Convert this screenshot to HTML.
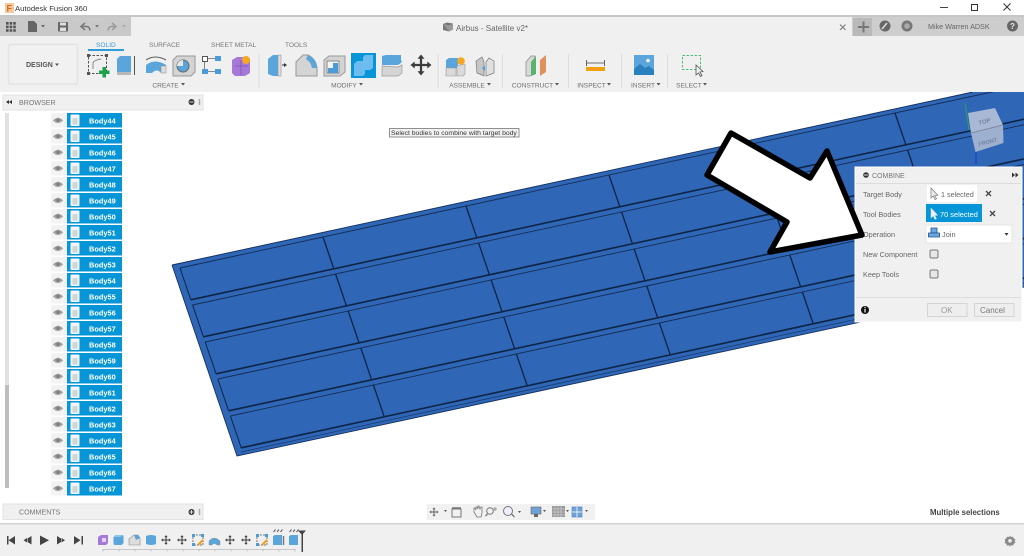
<!DOCTYPE html>
<html><head><meta charset="utf-8"><style>
html,body{margin:0;padding:0;width:1024px;height:556px;overflow:hidden;background:#fff}
svg{display:block;filter:blur(.35px)}
text{font-family:"Liberation Sans",sans-serif;font-size:7.6px;fill:#666}
.r{font-size:6.6px;fill:#6f6f6f;text-anchor:middle}
.t{font-size:6.6px;fill:#777}
.b{font-size:7.4px;font-weight:bold;fill:#fff}
.d{font-size:7.3px;fill:#666}
.l{stroke:#0e2547;fill:none;vector-effect:non-scaling-stroke}
</style></head><body>
<svg width="1024" height="556" viewBox="0 0 1024 556" xmlns="http://www.w3.org/2000/svg">
<defs>
<g id="row">
<rect x="51" y="0" width="16" height="14.5" fill="#f3f3f3"/>
<rect x="67" y="0" width="55" height="14.5" fill="#0696d7"/>
<rect x="70.500" y="1.500" width="9" height="11.500" rx="1" fill="#f4f4f4"/>
<rect x="72.500" y="5" width="5" height="6.500" fill="#cfd6da"/>
<path d="M53 7.500Q58 2 63 7.500Q58 12.500 53 7.500Z" fill="#a0a0a0"/>
<circle cx="58" cy="7.300" r="1.700" fill="#7f7f7f"/>
</g>
<g id="move" fill="#3c3c3c">
<path d="M-.8-5h1.600v10h-1.600zM-5-.8h10v1.600h-10z"/>
<path d="M0-7.500l2.500 3h-5zM0 7.500l2.500-3h-5zM-7.500 0l3-2.500v5zM7.500 0l-3-2.500v5z"/>
</g>
<g id="blk">
<path d="M-5-3l2-2h7l1 1v7l-2 2h-7l-1-1z" fill="#5aa5dc"/>
<path d="M-5-3l2-2h7l-2 2z" fill="#8cc4ea"/>
</g>
<g id="skt">
<rect x="-5" y="-5" width="10" height="10" fill="none" stroke="#777" stroke-dasharray="2 1"/>
<path d="M-6-6h3v3h-3zM3-6h3v3h-3zM-6 3h3v3h-3z" fill="#4a9bd8"/>
<path d="M0 5l5-5" stroke="#f39c12" stroke-width="2"/>
</g>
</defs>

<!-- plate -->
<path d="M172 265L973 92H1024V287L237 456Z" fill="#2f66b5"/>
<path d="M172 265L973 92M172 265L237 456L1024 287" fill="none" stroke="#15315f" stroke-width=".9"/>
<path d="M241 452L1024 283" fill="none" stroke="#1a3c73" stroke-width=".8"/>
<g transform="matrix(143 -31 12.6 37 180 268)">
<path class="l" d="M0 0H7M0 1H7M0 2H7M0 3H7M0 4H7" stroke-width=".9" stroke-opacity=".85"/>
<path class="l" d="M0 .86H7M0 1.860H7M0 2.860H7M0 3.860H7M0 4.860H7" stroke-width="1.600"/>
<path class="l" d="M0 0V.86M0 1V1.860M0 2V2.860M0 3V3.860M0 4V4.860" stroke-width="1"/>
<path class="l" d="M1 0V.86M1 1V1.860M1 2V2.860M1 3V3.860M1 4V4.860" stroke-width="1.300"/>
<path class="l" d="M2 0V.86M2 1V1.860M2 2V2.860M2 3V3.860M2 4V4.860" stroke-width="1.300"/>
<path class="l" d="M3 0V.86M3 1V1.860M3 2V2.860M3 3V3.860M3 4V4.860" stroke-width="1.300"/>
<path class="l" d="M4 0V.86M4 1V1.860M4 2V2.860M4 3V3.860M4 4V4.860" stroke-width="1.300"/>
<path class="l" d="M5 0V.86M5 1V1.860M5 2V2.860M5 3V3.860M5 4V4.860" stroke-width="1.300"/>
</g>

<!-- title bar -->
<rect x="0" y="0" width="1024" height="92" fill="#fff"/>
<rect x="0" y="15" width="1024" height="2" fill="#c6c6c6"/>
<rect x="0" y="17" width="1024" height="75" fill="#f0f0f0"/>
<rect x="0" y="17" width="131" height="19" fill="#c9c9c9"/>
<rect x="852" y="17" width="172" height="19" fill="#cdcdcd"/>
<rect x="853" y="18" width="19" height="18" fill="#b9b9b9"/>
<rect x="5" y="3" width="9" height="10" fill="#f5c99a"/>
<text x="6.500" y="11.500" style="font-size:9px;font-weight:bold;fill:#d9661f">F</text>
<text x="15" y="11" style="font-size:7.700px;fill:#333">Autodesk Fusion 360</text>
<path d="M940 7.500h8" stroke="#444" stroke-width="1"/>
<rect x="971.500" y="4.500" width="6" height="6" fill="none" stroke="#333"/>
<path d="M1003.500 3.500l7 7M1010.500 3.500l-7 7" stroke="#333" stroke-width="1"/>

<!-- tab bar left -->
<path d="M6 22h2.600v2.600H6zM9.600 22h2.600v2.600H9.600zM13.200 22h2.600v2.600h-2.600zM6 25.600h2.600v2.600H6zM9.600 25.600h2.600v2.600H9.600zM13.200 25.600h2.600v2.600h-2.600zM6 29.200h2.600v2.600H6zM9.600 29.200h2.600v2.600H9.600zM13.200 29.200h2.600v2.600h-2.600z" fill="#555"/>
<path d="M28 21h6l3 3v8h-9z" fill="#666"/>
<path d="M41 25h4l-2 2.500z" fill="#666"/>
<rect x="58" y="22" width="10" height="9.500" rx="1" fill="#666"/><rect x="60" y="22.500" width="6" height="3" fill="#ddd"/><rect x="60" y="27.500" width="6" height="3.500" fill="#ddd"/>
<path d="M85 23l-4 3.500 4 3.500M81.500 26.500h5q3 0 3.500 4" fill="none" stroke="#777" stroke-width="1.500"/>
<path d="M95 25h4l-2 2.500z" fill="#777"/>
<path d="M112 23l4 3.500-4 3.500M115.500 26.500h-4q-3 0-3.500 4" fill="none" stroke="#9a9a9a" stroke-width="1.500"/>
<path d="M122 25h4l-2 2.500z" fill="#aaa"/>
<!-- document tab -->
<path d="M443 24l4-1.500 6 1v6l-4 2-6-1.500z" fill="#777"/><path d="M443 24l6 1.500 4-2v6l-4 2z" fill="#999"/>
<text x="456" y="31" style="font-size:8px;fill:#666">Airbus - Satellite v2*</text>
<path d="M840 24.500l5.500 5.500M845.500 24.500l-5.500 5.500" stroke="#777" stroke-width="1"/>
<path d="M858 27h11M863.500 21.500v11" stroke="#777" stroke-width="2"/>
<circle cx="885" cy="26" r="5.500" fill="#666"/><path d="M882 29l5-6" stroke="#ddd" stroke-width="1.500"/>
<circle cx="907" cy="26" r="5.500" fill="#777"/><circle cx="907" cy="26" r="2.800" fill="#aaa"/>
<text x="928" y="29" style="font-size:7.200px;fill:#666">Mike Warren ADSK</text>
<circle cx="1012.500" cy="26" r="5.500" fill="#666"/>
<text x="1010" y="29" style="font-size:8px;font-weight:bold;fill:#e8e8e8">?</text>

<!-- design button -->
<rect x="8.500" y="44.500" width="69" height="39.500" rx="2" fill="#f1f1f1" stroke="#e2e2e2" stroke-width="1.500"/>
<text x="26" y="67" style="font-size:7px;font-weight:bold;fill:#555">DESIGN</text>
<path d="M55 63.500h4l-2 2.500z" fill="#555"/>

<!-- ribbon tabs -->
<text class="t" x="96" y="47" style="fill:#3a9bd8">SOLID</text>
<text class="t" x="149" y="47">SURFACE</text>
<text class="t" x="211" y="47">SHEET METAL</text>
<text class="t" x="285" y="47">TOOLS</text>
<rect x="88" y="49" width="36" height="2" fill="#2f9bd8"/>

<!-- create icons -->
<rect x="88.500" y="55.500" width="18" height="18" fill="none" stroke="#555" stroke-dasharray="2.500 1.500"/>
<path d="M87 54h3v3h-3zM105 54h3v3h-3zM87 72h3v3h-3z" fill="#555"/>
<path d="M93 69V63q1-3 8-4" fill="none" stroke="#888"/>
<path d="M102.500 67h3.500v3.500h3.500v3.500h-3.500v3.500h-3.500v-3.500h-3.500v-3.500h3.500z" fill="#1aa34a"/>
<path d="M117 59l3-3h11v18l-3 1h-11z" fill="#5aa5dc"/><path d="M117 72h14v3h-14z" fill="#b8b8b8"/>
<path d="M134.500 56v19" stroke="#555"/>
<path d="M146 65q9-7 20 0v8h-5q-4-5-9 0h-6z" fill="#5aa5dc"/><path d="M146 60q9-6 20 0" fill="none" stroke="#555"/>
<rect x="161" y="66" width="5" height="7" fill="#ddd" stroke="#888" stroke-width=".500"/>
<path d="M173 60l4-4h18v16l-4 4h-18z" fill="#d4d4d4" stroke="#999"/>
<circle cx="183" cy="66" r="6" fill="#5aa5dc" stroke="#666"/><path d="M183 66v-6a6 6 0 0 0-6 6z" fill="#e8e8e8"/>
<rect x="202.500" y="56.500" width="5" height="5" fill="#fff" stroke="#555"/><rect x="215" y="56" width="6" height="5" fill="#4a9bd8"/><rect x="202" y="69" width="6" height="5" fill="#4a9bd8"/><rect x="215" y="69" width="6" height="5" fill="#4a9bd8"/>
<path d="M208 58.500h7M208 71.500h7M204.500 62v7" stroke="#666" stroke-width=".800"/>
<path d="M232 60l5-3h11l2 3v13l-5 3h-10l-3-3z" fill="#a678d8"/><path d="M235 66h13M241 60v15" stroke="#8050b8" stroke-width=".800"/>
<circle cx="246" cy="60" r="4" fill="#f5a623"/>
<text class="r" x="165.500" y="87.500">CREATE</text><path d="M181 83h4l-2 2.500z" fill="#555"/>
<rect x="258.500" y="54" width="1" height="34" fill="#dcdcdc"/>

<!-- modify icons -->
<path d="M268 59l5-4h7v21h-7l-5-2z" fill="#5aa5dc"/><path d="M278 55h3v21h-3z" fill="#ddd" stroke="#888" stroke-width=".500"/>
<path d="M282 65h3" stroke="#333"/><path d="M284 63l3 2-3 2z" fill="#333"/>
<path d="M296 62l7-7h5q8 4 9 13v8h-21z" fill="#d4d4d4" stroke="#999"/><path d="M308 55q8 4 9 13h-5q-1-6-6-9z" fill="#5aa5dc"/>
<path d="M324 60l5-4h16v16l-5 4h-16z" fill="#d4d4d4" stroke="#999"/><rect x="327" y="61" width="12" height="12" fill="#f4f4f4" stroke="#888"/><path d="M328 73v-5h5v-5h5v10z" fill="#4a9bd8"/>
<rect x="351" y="53" width="25" height="25" fill="#0696d7"/>
<path d="M354 64l3-3h6v-4l2-2h8v13l-3 2h-5v4l-2 2h-9z" fill="#6cbcf0"/>
<path d="M382 56l4-1h15v8l-3 2h-16z" fill="#5aa5dc"/><path d="M382 63q9 4 20-2" stroke="#5aa5dc" fill="none"/>
<path d="M382 66l16 1 4-2v8l-4 3h-16z" fill="#d4d4d4" stroke="#999" stroke-width=".700"/>
<use href="#move" transform="translate(421 65) scale(1.400)"/>
<rect x="437.500" y="54" width="1" height="34" fill="#dcdcdc"/>
<text class="r" x="344" y="87.500">MODIFY</text><path d="M359 83h4l-2 2.500z" fill="#555"/>

<!-- assemble -->
<path d="M446 60l3-2h9v10h-12z" fill="#5aa5dc"/><path d="M446 68h10v8h-10zM457 66l8-2v10l-2 2h-6z" fill="#dadada" stroke="#999" stroke-width=".600"/>
<circle cx="461" cy="61" r="3.800" fill="#f5a623"/>
<path d="M476 61l6-4 2 5v14l-7-3z" fill="#c6c6c6" stroke="#777" stroke-width=".700"/>
<path d="M494 61l-5-3-3 4v14l8-3z" fill="#e0e0e0" stroke="#777" stroke-width=".700"/>
<path d="M482 68l3-2v5z" fill="#4a9bd8"/>
<text class="r" x="467" y="87.500">ASSEMBLE</text><path d="M487 83h4l-2 2.500z" fill="#555"/>
<rect x="502" y="54" width="1" height="34" fill="#dcdcdc"/>

<!-- construct -->
<path d="M526 62l5-6h4v18l-5 2h-4z" fill="#d8d8d8" stroke="#888" stroke-width=".700"/>
<path d="M531 62l5-6v18l-5 2z" fill="#59b36c"/>
<path d="M540 60l6-5v17l-6 4z" fill="#e0905a"/>
<text class="r" x="532.500" y="87.500">CONSTRUCT</text><path d="M555 83h4l-2 2.500z" fill="#555"/>
<rect x="568" y="54" width="1" height="34" fill="#dcdcdc"/>

<!-- inspect -->
<rect x="586" y="67" width="19" height="4" fill="#f0a010"/>
<path d="M586.500 60v6M604.500 60v6M587 63h17" stroke="#444" stroke-width=".800"/>
<text class="r" x="591.500" y="87.500">INSPECT</text><path d="M607 83h4l-2 2.500z" fill="#555"/>
<rect x="621" y="54" width="1" height="34" fill="#dcdcdc"/>

<!-- insert -->
<rect x="634" y="55" width="20" height="20" fill="#5aa5dc"/>
<path d="M634 75v-6l6-5 5 4 4-2 5 4v5z" fill="#2a7fbf"/>
<circle cx="648" cy="60.500" r="1.800" fill="#fff"/>
<text class="r" x="643" y="87.500">INSERT</text><path d="M656.500 83h4l-2 2.500z" fill="#555"/>
<rect x="667" y="54" width="1" height="34" fill="#dcdcdc"/>

<!-- select -->
<rect x="682.500" y="55.500" width="18" height="14" fill="none" stroke="#4fbf78" stroke-dasharray="2.500 1.500"/>
<path d="M696 65v10l2.500-2 2 3.500 1.500-1-2-3.500 3-.5z" fill="#eee" stroke="#555" stroke-width=".800"/>
<text class="r" x="689" y="87.500">SELECT</text><path d="M703 83h4l-2 2.500z" fill="#555"/>

<!-- tooltip -->
<rect x="389.500" y="128.500" width="129.500" height="8.500" fill="#f2f2f2" stroke="#777" stroke-width=".800"/>
<text x="391" y="135" style="font-size:6.800px;fill:#333">Select bodies to combine with target body</text>

<!-- browser -->
<rect x="3" y="95" width="200" height="15" fill="#f0f0f0" stroke="#e2e2e2"/>
<path d="M9 102l3-2v4zM6 102l3-2v4z" fill="#333"/>
<text x="19" y="105" style="font-size:7.100px;fill:#777">BROWSER</text>
<circle cx="191.500" cy="102" r="3" fill="#333"/><rect x="189.500" y="101.500" width="4" height="1" fill="#ddd"/>
<path d="M199.500 99v6" stroke="#aaa" stroke-width="1.500"/>
<rect x="5" y="113" width="4" height="272" fill="#e1e1e1"/>
<rect x="5" y="385" width="4" height="103" fill="#bdbdbd"/>

<use href="#row" y="113"/><text class="b" x="89" y="123.500">Body44</text>
<use href="#row" y="129"/><text class="b" x="89" y="139.500">Body45</text>
<use href="#row" y="145"/><text class="b" x="89" y="155.500">Body46</text>
<use href="#row" y="161"/><text class="b" x="89" y="171.500">Body47</text>
<use href="#row" y="177"/><text class="b" x="89" y="187.500">Body48</text>
<use href="#row" y="193"/><text class="b" x="89" y="203.500">Body49</text>
<use href="#row" y="209"/><text class="b" x="89" y="219.500">Body50</text>
<use href="#row" y="225"/><text class="b" x="89" y="235.500">Body51</text>
<use href="#row" y="241"/><text class="b" x="89" y="251.500">Body52</text>
<use href="#row" y="257"/><text class="b" x="89" y="267.500">Body53</text>
<use href="#row" y="273"/><text class="b" x="89" y="283.500">Body54</text>
<use href="#row" y="289"/><text class="b" x="89" y="299.500">Body55</text>
<use href="#row" y="305"/><text class="b" x="89" y="315.500">Body56</text>
<use href="#row" y="321"/><text class="b" x="89" y="331.500">Body57</text>
<use href="#row" y="337"/><text class="b" x="89" y="347.500">Body58</text>
<use href="#row" y="353"/><text class="b" x="89" y="363.500">Body59</text>
<use href="#row" y="369"/><text class="b" x="89" y="379.500">Body60</text>
<use href="#row" y="385"/><text class="b" x="89" y="395.500">Body61</text>
<use href="#row" y="401"/><text class="b" x="89" y="411.500">Body62</text>
<use href="#row" y="417"/><text class="b" x="89" y="427.500">Body63</text>
<use href="#row" y="433"/><text class="b" x="89" y="443.500">Body64</text>
<use href="#row" y="449"/><text class="b" x="89" y="459.500">Body65</text>
<use href="#row" y="465"/><text class="b" x="89" y="475.500">Body66</text>
<use href="#row" y="481"/><text class="b" x="89" y="491.500">Body67</text>

<!-- comments -->
<rect x="3" y="504" width="200" height="15.500" fill="#f0f0f0" stroke="#e2e2e2"/>
<text x="19" y="514.500" style="font-size:7.100px;fill:#777">COMMENTS</text>
<circle cx="191.500" cy="512" r="3" fill="#333"/><rect x="189.500" y="511.500" width="4" height="1" fill="#ddd"/><rect x="191" y="510" width="1" height="4" fill="#ddd"/>
<path d="M199.500 509v6" stroke="#aaa" stroke-width="1.500"/>

<!-- viewcube -->
<path d="M968 113l27-5 8 17-32 8z" fill="#a9b8d4"/>
<path d="M971 133l32-8 .5 18-28 9z" fill="#9db0cf"/>
<path d="M971 133l32-8" stroke="#78808c" stroke-width=".800"/>
<path d="M965 103l4 27" stroke="#2f9e5f" stroke-width="1"/>
<path d="M976 152v12" stroke="#1c3fd0" stroke-width="1.200"/>
<text transform="translate(979 125) rotate(-14)" style="font-size:6px;font-weight:bold;fill:#74849f">TOP</text>
<text transform="translate(979 146) rotate(-14)" style="font-size:5.500px;font-weight:bold;fill:#74849f">FRONT</text>

<!-- dialog -->
<rect x="855" y="167" width="167" height="155" fill="#f0f0f0" stroke="#fff" stroke-width="1"/>
<rect x="856" y="183" width="165" height="1" fill="#dcdcdc"/>
<rect x="856" y="297" width="165" height="1" fill="#dcdcdc"/>
<circle cx="866" cy="175" r="2.800" fill="#333"/><rect x="864" y="174.500" width="4" height="1" fill="#ddd"/>
<text x="872" y="178" style="font-size:7px;fill:#777">COMBINE</text>
<path d="M1012 172.500l3 2.500-3 2.500zM1015.500 172.500l3 2.500-3 2.500z" fill="#333"/>
<text class="d" x="863" y="197">Target Body</text>
<text class="d" x="863" y="217">Tool Bodies</text>
<text class="d" x="863" y="237">Operation</text>
<text class="d" x="863" y="257">New Component</text>
<text class="d" x="863" y="277">Keep Tools</text>
<rect x="927" y="185" width="50" height="17" fill="#fff"/>
<path d="M931 188v10l2.300-2 1.700 3.500 1.500-.8-1.700-3.200 3-.3z" fill="#eee" stroke="#777" stroke-width=".700"/>
<text x="941" y="197" style="font-size:7.200px;fill:#666">1 selected</text>
<path d="M986 191l5 5M991 191l-5 5" stroke="#444" stroke-width="1.300"/>
<rect x="926" y="204" width="56" height="18" fill="#0696d7"/>
<path d="M931 208v10l2.300-2 1.700 3.500 1.500-.8-1.700-3.200 3-.3z" fill="#eef" stroke="#cde" stroke-width=".500"/>
<text x="940" y="217" style="font-size:7.400px;fill:#fff">70 selected</text>
<path d="M990 211l5 5M995 211l-5 5" stroke="#444" stroke-width="1.300"/>
<rect x="926" y="225" width="86" height="18" fill="#fff" stroke="#e6e6e6"/>
<path d="M931 228h6v5h-6z" fill="#6aa7dc" stroke="#1f4f90" stroke-width=".800"/><path d="M928.500 233h11v4h-11z" fill="#6aa7dc" stroke="#1f4f90" stroke-width=".800"/>
<text x="942" y="237" style="font-size:7.400px;fill:#666">Join</text>
<path d="M1004.500 233h4l-2 2.800z" fill="#333"/>
<rect x="930" y="250" width="8" height="8" rx="1.500" fill="#e6e6e6" stroke="#777"/>
<rect x="930" y="270" width="8" height="8" rx="1.500" fill="#e6e6e6" stroke="#777"/>
<circle cx="865" cy="310" r="4" fill="#111"/><rect x="864.400" y="308.800" width="1.200" height="3.700" fill="#fff"/><rect x="864.400" y="306.900" width="1.200" height="1.100" fill="#fff"/>
<rect x="927.500" y="303.500" width="39.500" height="13" fill="#eee" stroke="#d4d4d4"/>
<text x="941" y="313" style="font-size:8px;fill:#999">OK</text>
<rect x="974.500" y="303.500" width="39.500" height="13" fill="#eee" stroke="#d4d4d4"/>
<text x="980" y="313" style="font-size:8px;fill:#777">Cancel</text>

<!-- big arrow -->
<path d="M731 133L810 178L827 151L862 235L770 252L787 222L707 175Z" fill="#fff" stroke="#000" stroke-width="5.500" stroke-linejoin="round"/>

<!-- nav bar -->
<rect x="427" y="504" width="168" height="16" fill="#f1f1f1"/>
<use href="#move" transform="translate(434 512) scale(.62)" opacity=".8"/>
<path d="M444 510h3l-1.500 2z" fill="#555"/>
<rect x="452" y="509" width="9" height="8" fill="none" stroke="#777"/><path d="M452 508h9" stroke="#777" stroke-width="1.500"/>
<path d="M477 517l-3-5v-4h1l1 2v-3h1l1 2v-3h1l1 3 1-2h1v6l-1 4z" fill="none" stroke="#777" stroke-width=".800"/>
<circle cx="490" cy="511" r="3.300" fill="none" stroke="#777"/><path d="M487.500 514l-2 2" stroke="#777" stroke-width="1.300"/><path d="M495 507v4M493 509h4" stroke="#777" stroke-width=".700"/>
<circle cx="508" cy="511" r="4.500" fill="#eef" stroke="#777"/><path d="M511.500 514l3 3" stroke="#777" stroke-width="1.300"/>
<path d="M518 511h3l-1.500 2z" fill="#555"/>
<rect x="531" y="507" width="10" height="7" fill="#6fa3d8" stroke="#666" stroke-width=".600"/><rect x="534" y="514" width="4" height="3" fill="#666"/>
<path d="M543 510h3l-1.500 2z" fill="#555"/>
<rect x="552" y="506" width="13" height="11" fill="#999"/><path d="M555 506v11M558 506v11M561 506v11M552 509h13M552 512h13M552 515h13" stroke="#ddd" stroke-width=".500"/>
<path d="M566 510h3l-1.500 2z" fill="#555"/>
<rect x="572" y="507" width="10" height="10" fill="#6fa3d8" stroke="#4f7fb8" stroke-width=".600"/><path d="M572 512h10M577 507v10" stroke="#fff" stroke-width=".800"/>
<path d="M585 510h3l-1.500 2z" fill="#555"/>
<text x="930" y="515" style="font-size:7.800px;font-weight:bold;fill:#444">Multiple selections</text>

<!-- timeline -->
<rect x="0" y="523" width="1024" height="33" fill="#f0f0f0"/>
<rect x="0" y="523" width="1024" height="1.500" fill="#d2d2d2"/>
<g fill="#444">
<path d="M7 536h1.500v8.500H7zM15 536v8.500l-6.500-4.250z"/>
<path d="M31.500 536v8.500l-4-2.500v-3.500zM27 538l-3.500 2.250 3.500 2.250z"/>
<path d="M40 535.500l9 4.800-9 4.800z"/>
<path d="M57 536v8.500l4-2.500v-3.500zM61.500 538l3.500 2.250-3.500 2.250z"/>
<path d="M81.500 536H83v8.500h-1.500zM74 536v8.500l6.500-4.250z"/>
</g>
<path d="M98 537l3-2h7v8l-2 2h-8z" fill="#a678d8"/><rect x="102" y="538" width="4" height="4" fill="#e0d4f0"/>
<use href="#blk" transform="translate(118.500 540)"/>
<path d="M129 539l5-4h4l2 3v7h-11z" fill="#ddd" stroke="#888" stroke-width=".600"/><path d="M134 535h4l2 3-4 2z" fill="#5aa5dc"/>
<path d="M146 536q5-2 10 0v8q-5 2-10 0z" fill="#5aa5dc"/>
<use href="#move" transform="translate(166 540) scale(.65)"/>
<use href="#move" transform="translate(182 540) scale(.65)"/>
<use href="#skt" transform="translate(198 540)"/>
<path d="M209 541q5-6 11 0v4h-3q-3-3-5 0h-3z" fill="#5aa5dc" stroke="#888" stroke-width=".400"/>
<use href="#move" transform="translate(230 540) scale(.65)"/>
<use href="#move" transform="translate(246 540) scale(.65)"/>
<use href="#skt" transform="translate(262 540)"/>
<path d="M273 536l2-1h7v10h-9z" fill="#5aa5dc"/><path d="M283.500 536v9" stroke="#777" stroke-width="1.500"/>
<path d="M289 536l2-1h7v10h-9z" fill="#5aa5dc"/>
<path d="M273.500 532l2-2.500M277 532l2-2.500M280.500 532l2-2.500M289.500 532l2-2.500M293 532l2-2.500M296.500 532l2-2.500" stroke="#444" stroke-width="1"/>
<path d="M103 549.500H296M103 549v2.500M119 549v2.500M135 549v2.500M151 549v2.500M167 549v2.500M183 549v2.500M199 549v2.500M215 549v2.500M231 549v2.500M247 549v2.500M263 549v2.500M279 549v2.500M295 549v2.500" stroke="#bbb" stroke-width=".800" fill="none"/>
<path d="M298 530.500h8l-4 4.500z" fill="#444"/><rect x="301.500" y="533" width="1.500" height="19" fill="#444"/>
<path d="M1010 535.500l1 1.500 2-.3.800 1.800 1.700 1-.9 1.600.9 1.600-1.700 1-.8 1.800-2-.3-1 1.500-1-1.500-2 .3-.8-1.800-1.700-1 .9-1.600-.9-1.600 1.700-1 .8-1.800 2 .3z" fill="#8a8a8a"/>
<circle cx="1010" cy="540.800" r="1.800" fill="#f0f0f0"/>
</svg>
</body></html>
